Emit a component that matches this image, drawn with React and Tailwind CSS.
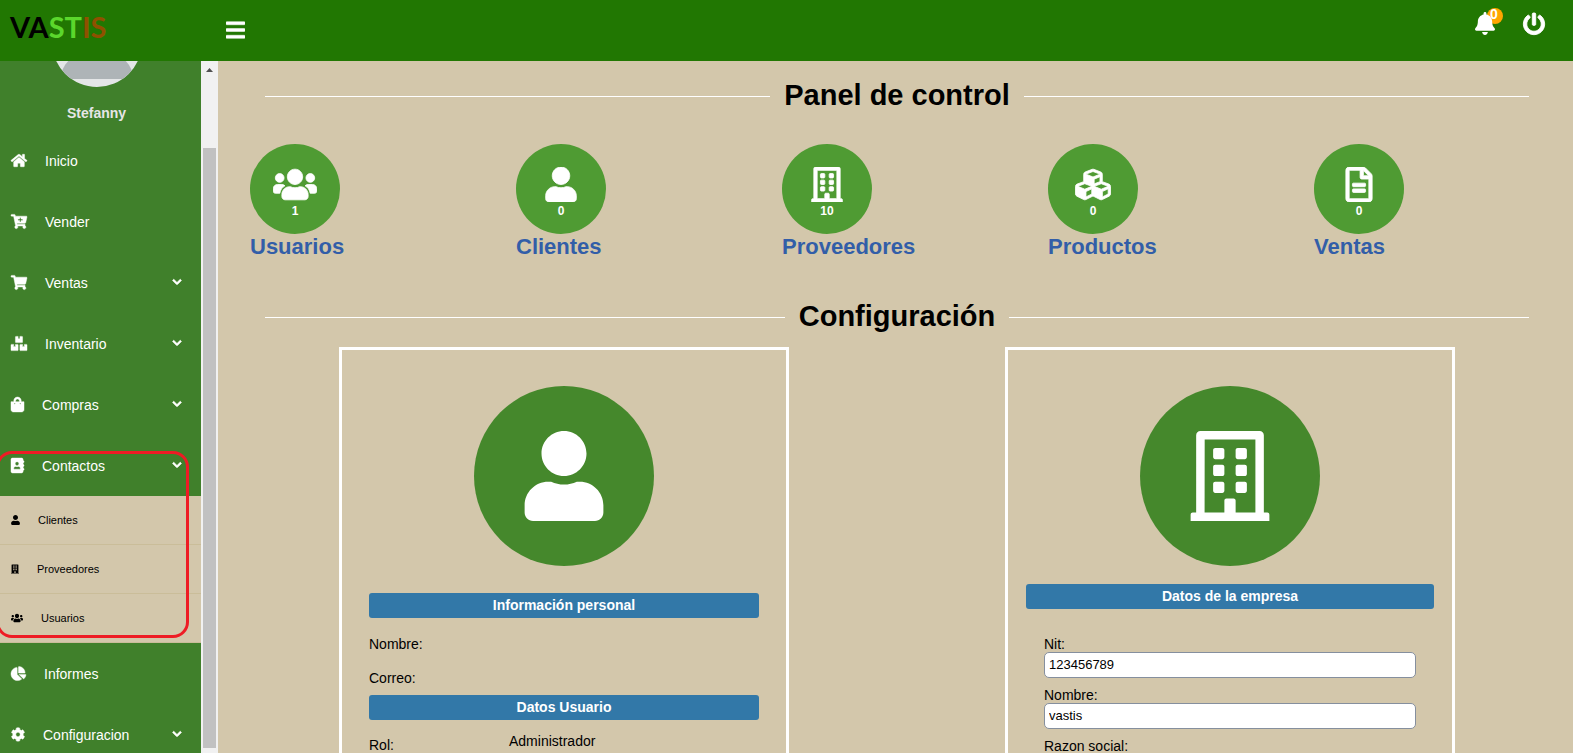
import { useState } from 'react'
import {
  FaAddressBook,
  FaBars,
  FaBell,
  FaBoxes,
  FaBuilding,
  FaCartPlus,
  FaChartPie,
  FaChevronDown,
  FaCog,
  FaCubes,
  FaHome,
  FaPowerOff,
  FaRegBuilding,
  FaRegFileAlt,
  FaShoppingBag,
  FaShoppingCart,
  FaUser,
  FaUsers,
} from 'react-icons/fa'

const menu = [
  { label: 'Inicio', icon: FaHome, width: 'w-4' },
  { label: 'Vender', icon: FaCartPlus, width: 'w-4' },
  { label: 'Ventas', icon: FaShoppingCart, width: 'w-4', children: [] },
  { label: 'Inventario', icon: FaBoxes, width: 'w-4', children: [] },
  { label: 'Compras', icon: FaShoppingBag, width: 'w-[13px]', children: [] },
  {
    label: 'Contactos',
    icon: FaAddressBook,
    width: 'w-[13px]',
    children: [
      { label: 'Clientes', icon: FaUser, width: 'w-[9px]' },
      { label: 'Proveedores', icon: FaBuilding, width: 'w-2' },
      { label: 'Usuarios', icon: FaUsers, width: 'w-3' },
    ],
  },
  { label: 'Informes', icon: FaChartPie, width: 'w-[15px]' },
  { label: 'Configuracion', icon: FaCog, width: 'w-3.5', children: [] },
]

const stats = [
  { label: 'Usuarios', count: 1, icon: FaUsers },
  { label: 'Clientes', count: 0, icon: FaUser },
  { label: 'Proveedores', count: 10, icon: FaRegBuilding },
  { label: 'Productos', count: 0, icon: FaCubes },
  { label: 'Ventas', count: 0, icon: FaRegFileAlt },
]

function TopBar({ onToggle }) {
  return (
    <header className="flex h-[61px] shrink-0 items-start bg-[#217702] text-white">
      <a href="#" className="w-[226px] pt-2 pl-[10px] font-['Lato',sans-serif] text-[29px] leading-[38px] font-bold text-black">
        VA<span className="text-[#5bd72c]">ST</span><span className="text-[#8f5000]">IS</span>
      </a>
      <button onClick={onToggle} aria-label="Menu" className="mt-[19px]">
        <FaBars size={22} className="w-[19px] stroke-12" />
      </button>
      <div className="ml-auto flex gap-7 pt-3 pr-7">
        <button aria-label="Notificaciones" className="relative">
          <span className="absolute -top-1 left-3 size-4 rounded-full bg-[#ffa500]" />
          <FaBell size={23} className="relative w-5" />
          <span className="absolute -top-1 left-[15px] text-[14px] leading-3 font-bold">0</span>
        </button>
        <button aria-label="Salir">
          <FaPowerOff size={22} className="stroke-20 overflow-visible" />
        </button>
      </div>
    </header>
  )
}

function Avatar() {
  return (
    <svg viewBox="0 0 90 90" className="size-[90px] shrink-0 rounded-full">
      <rect width="90" height="90" fill="#e4e6e7" />
      <circle cx="45" cy="32" r="17" fill="#aeb4b7" />
      <path d="M8 82C10 65 24 53 45 53s35 12 37 29z" fill="#aeb4b7" />
    </svg>
  )
}

function MenuItem({ item, open, onToggle }) {
  const Icon = item.icon
  const row = 'flex h-[61px] w-full items-center gap-[18px] pl-[11px] pr-[19px] text-sm text-white'
  const icon = <Icon className={`h-[15px] shrink-0 stroke-16 overflow-visible ${item.width}`} />

  if (!item.children) {
    return (
      <li>
        <a href="#" className={row}>
          {icon}
          {item.label}
        </a>
      </li>
    )
  }

  return (
    <li>
      <button onClick={onToggle} aria-expanded={open} className={row}>
        {icon}
        {item.label}
        <FaChevronDown size={10} className="mb-0.5 ml-auto stroke-40 overflow-visible" />
      </button>
      {open && item.children.length > 0 && (
        <ul className="bg-[#d3c7ab]">
          {item.children.map(({ label, icon: SubIcon, width }) => (
            <li key={label} className="border-b border-[#cabd99]">
              <a href="#" className="flex h-12 items-center gap-[18px] pl-[11px] text-[11px] text-black">
                <SubIcon className={`h-[10px] shrink-0 ${width}`} />
                {label}
              </a>
            </li>
          ))}
        </ul>
      )}
    </li>
  )
}

function Sidebar() {
  const [openItem, setOpenItem] = useState('Contactos')

  return (
    <aside className="flex shrink-0">
      <div className="relative w-[201px] overflow-hidden bg-[#40802b]">
        <div className="flex h-[26px] items-end justify-center overflow-hidden pr-2">
          <Avatar />
        </div>
        <p className="pt-4 pr-2 pb-[7px] text-center text-sm font-bold text-[#e6e6e6]">Stefanny</p>
        <ul>
          {menu.map(item => (
            <MenuItem
              key={item.label}
              item={item}
              open={openItem === item.label}
              onToggle={() => setOpenItem(openItem === item.label ? '' : item.label)}
            />
          ))}
        </ul>
        {/* Highlight around the contacts group */}
        <div className="pointer-events-none absolute top-[390px] -left-1 h-[187px] w-[193px] rounded-2xl border-3 border-[#ee1c25]" />
      </div>

      {/* Scroll track */}
      <div className="flex w-[17px] flex-col items-center bg-[#f1f1f1] pb-[5px]">
        <svg viewBox="0 0 17 17" className="size-[17px] shrink-0">
          <path d="M5 11h7L8.500 7z" fill="#505050" />
        </svg>
        <div className="mt-[70px] w-[13px] flex-1 bg-[#c1c1c1]" />
      </div>
    </aside>
  )
}

function SectionTitle({ children }) {
  return (
    <div className="flex items-center gap-[14px] pr-11 pl-[47px]">
      <span className="h-px flex-1 bg-white" />
      <h2 className="pb-0.5 text-[29px] leading-[34px] font-bold text-black">{children}</h2>
      <span className="h-px flex-1 bg-white" />
    </div>
  )
}

function Stat({ label, count, icon: Icon }) {
  return (
    <a href="#" className="pl-5">
      <div className="flex size-[90px] flex-col items-center rounded-full bg-[#4f9b33] pt-[23px] text-white">
        <Icon className="h-[35px] w-11 stroke-12" />
        <span className="text-xs leading-[18px] font-bold">{count}</span>
      </div>
      <p className="text-[22px] leading-[26px] font-bold text-[#325ea8]">{label}</p>
    </a>
  )
}

function Badge({ icon: Icon }) {
  return (
    <div className="mx-auto flex size-[180px] items-center justify-center rounded-full bg-[#45882c] text-white">
      <Icon size={90} />
    </div>
  )
}

function Bar({ children }) {
  return (
    <h3 className="rounded-[3px] bg-[#3278a8] text-center text-sm leading-[25px] font-bold text-white">{children}</h3>
  )
}

function Field({ id, label, value }) {
  return (
    <div className="mb-2">
      <label htmlFor={id} className="block pt-0.5 text-sm leading-[15px]">{label}</label>
      <input
        id={id}
        defaultValue={value}
        className="block h-[26px] w-full rounded-[5px] border border-[#858f9e] bg-white px-1 pb-0.5 text-[13px]"
      />
    </div>
  )
}

export default function App() {
  const [showSidebar, setShowSidebar] = useState(true)

  return (
    <div className="flex h-screen flex-col overflow-hidden bg-[#d3c7ab] font-['Liberation_Sans',Arial,sans-serif] text-black">
      <TopBar onToggle={() => setShowSidebar(!showSidebar)} />
      <div className="flex min-h-0 flex-1">
        {showSidebar && <Sidebar />}

        <main className="min-w-0 flex-1 overflow-hidden pt-[17px]">
          <SectionTitle>Panel de control</SectionTitle>
          <div className="mt-[30px] grid grid-cols-5 pr-[13px] pl-3">
            {stats.map(s => <Stat key={s.label} {...s} />)}
          </div>

          <div className="mt-[39px]">
            <SectionTitle>Configuración</SectionTitle>
          </div>
          <div className="mt-3 grid grid-cols-2 pr-[10px] pl-[13px]">
            {/* User data */}
            <section className="mx-auto w-full max-w-[450px] border-3 border-white px-[27px] pt-9">
              <Badge icon={FaUser} />
              <div className="mt-[27px]">
                <Bar>Información personal</Bar>
              </div>
              <p className="mt-4 text-sm leading-[20px]">Nombre:</p>
              <p className="mt-[14px] mb-[7px] text-sm leading-[20px]">Correo:</p>
              <Bar>Datos Usuario</Bar>
              <div className="mt-[11px] grid grid-cols-[140px_1fr] text-sm">
                <span className="pt-1.5 leading-4">Rol:</span>
                <span>Administrador</span>
              </div>
            </section>

            {/* Company data */}
            <section className="mx-auto w-full max-w-[450px] border-3 border-white px-[18px] pt-9">
              <Badge icon={FaRegBuilding} />
              <div className="mt-[18px]">
                <Bar>Datos de la empresa</Bar>
              </div>
              <form className="mt-[26px] px-[18px]">
                <Field id="nit" label="Nit:" value="123456789" />
                <Field id="nombre" label="Nombre:" value="vastis" />
                <Field id="razon" label="Razon social:" />
              </form>
            </section>
          </div>
        </main>
      </div>
    </div>
  )
}
